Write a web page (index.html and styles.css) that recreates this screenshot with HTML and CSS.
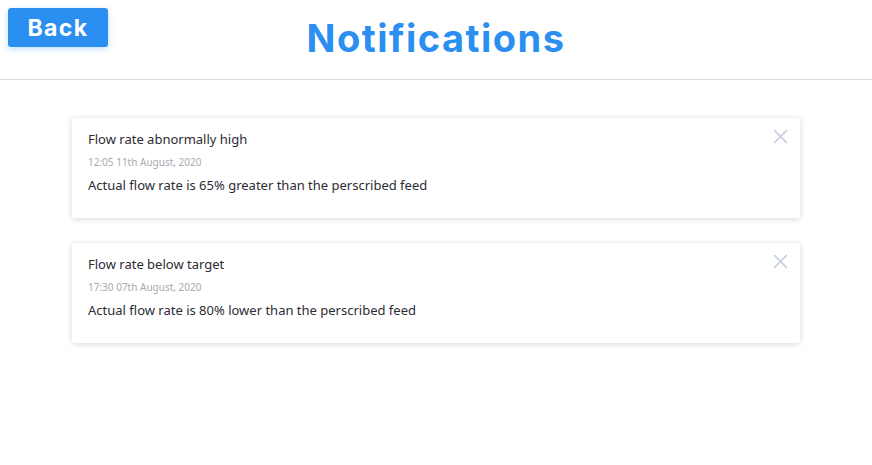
FILE: index.html
```html
<!DOCTYPE html>
<html>
<head>
<meta charset="utf-8">
<link rel="stylesheet" href="styles.css">
</head>
<body>
<header class="header">
  <button class="back">Back</button>
  <h1 class="title">Notifications</h1>
</header>
<main class="list">
  <div class="card">
    <div class="card-title">Flow rate abnormally high</div>
    <div class="card-date">12:05 11th August, 2020</div>
    <div class="card-body">Actual flow rate is 65% greater than the perscribed feed</div>
    <button class="close" aria-label="close"><svg width="15" height="15" viewBox="0 0 15 15"><path d="M1 1L14 14M14 1L1 14" stroke="#c3cbe0" stroke-width="1.6" fill="none"/></svg></button>
  </div>
  <div class="card">
    <div class="card-title">Flow rate below target</div>
    <div class="card-date">17:30 07th August, 2020</div>
    <div class="card-body">Actual flow rate is 80% lower than the perscribed feed</div>
    <button class="close" aria-label="close"><svg width="15" height="15" viewBox="0 0 15 15"><path d="M1 1L14 14M14 1L1 14" stroke="#c3cbe0" stroke-width="1.6" fill="none"/></svg></button>
  </div>
</main>
</body>
</html>
```
FILE: styles.css
```css
html, body { margin: 0; padding: 0; background: #fff; }
body { font-family: "Noto Sans", "Liberation Sans", sans-serif; }
.header {
  position: relative;
  height: 79px;
  border-bottom: 1px solid #d9d9d9;
  display: flex;
  justify-content: center;
}
.back {
  position: absolute;
  left: 8px;
  top: 8px;
  width: 100px;
  height: 39px;
  border: none;
  border-radius: 3px;
  background: #2b8ff2;
  color: #fff;
  font-family: "Inter", sans-serif;
  font-weight: 700;
  font-size: 23px;
  letter-spacing: 1.4px;
  padding: 0;
  box-shadow: 0 2px 6px rgba(43,143,242,0.3);
}
.title {
  margin: 14px 0 0;
  font-family: "Inter", sans-serif;
  font-weight: 700;
  font-size: 38px;
  letter-spacing: 1.5px;
  color: #2b8ff2;
  line-height: 48px;
}
.list {
  padding: 38px 72px 40px;
  display: flex;
  flex-direction: column;
  gap: 25px;
}
.card {
  position: relative;
  height: 100px;
  box-sizing: border-box;
  padding: 12px 16px;
  background: #fff;
  border-radius: 3px;
  box-shadow: 0 1px 6px rgba(0,0,0,0.16);
}
.card-title { font-size: 13px; color: #2c2c34; line-height: 18px; }
.card-date { font-size: 10px; color: #a9a9ae; line-height: 14px; margin-top: 7px; }
.card-body { font-size: 13px; color: #2c2c34; line-height: 18px; margin-top: 7px; }
.close {
  position: absolute;
  right: 12px;
  top: 11px;
  border: none;
  background: none;
  padding: 0;
  width: 15px;
  height: 15px;
}
.close svg { display: block; }
```
